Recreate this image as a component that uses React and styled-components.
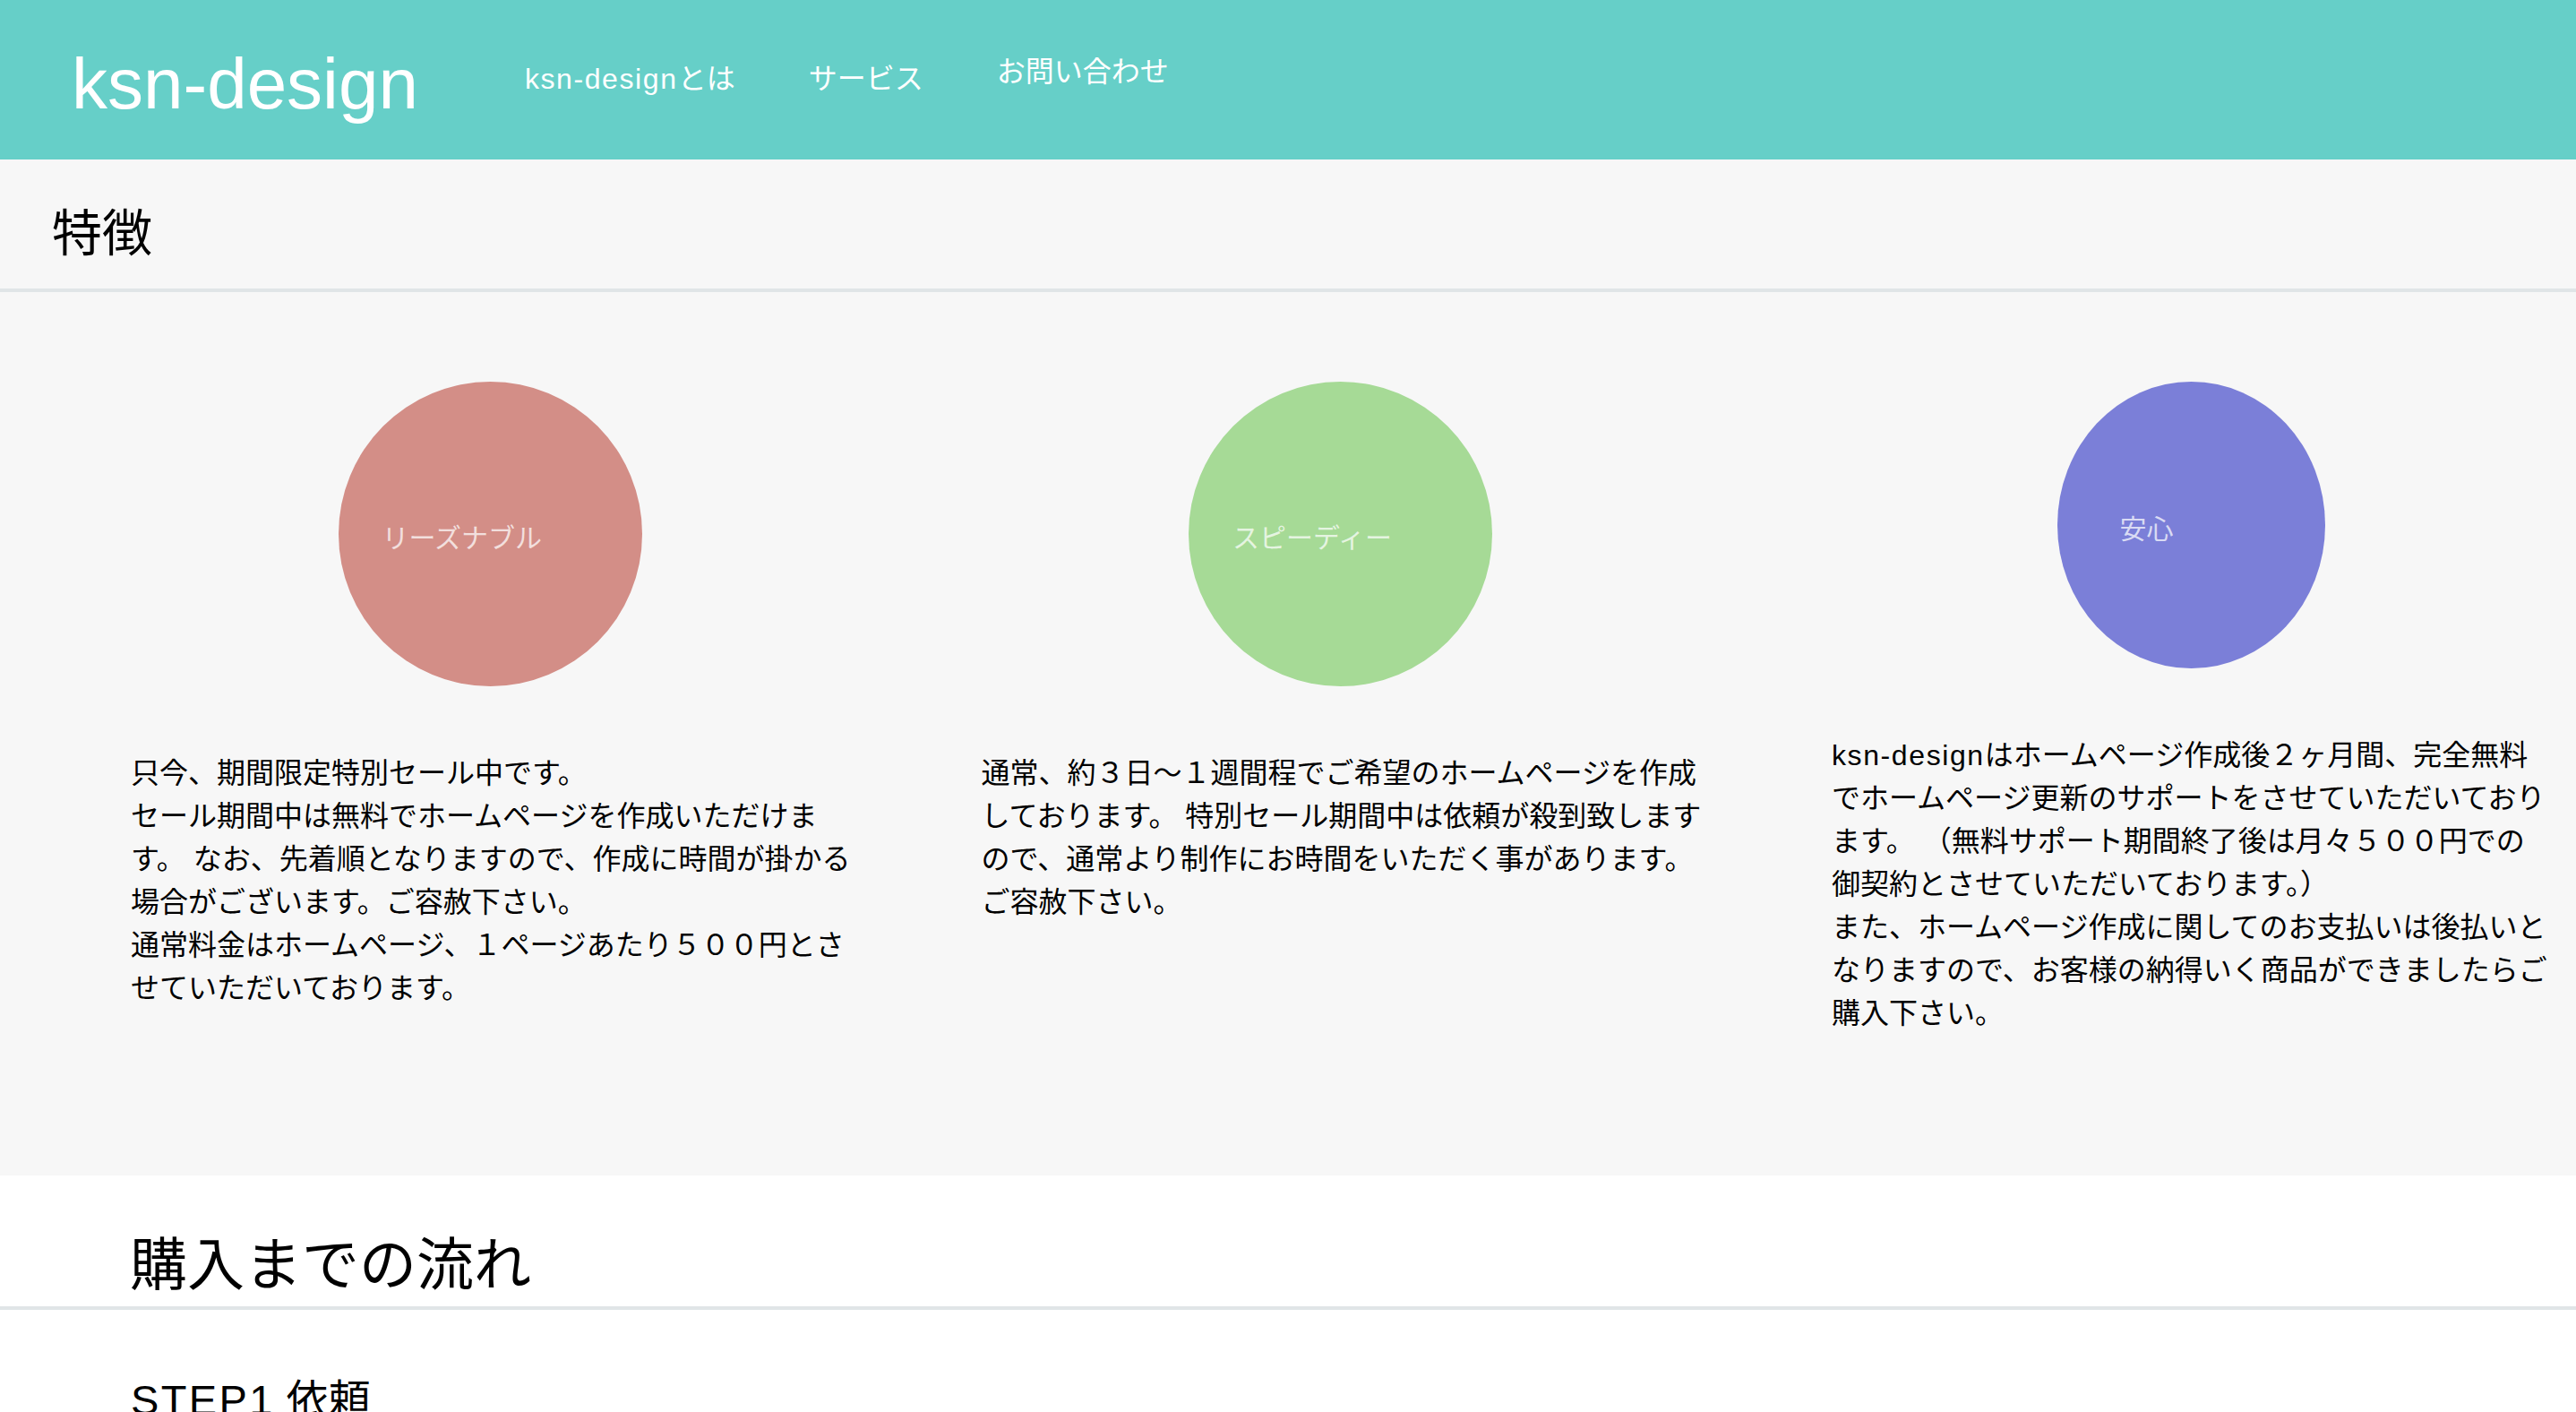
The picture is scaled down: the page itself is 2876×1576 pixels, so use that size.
import styled, { createGlobalStyle } from "styled-components";

const GlobalStyle = createGlobalStyle`
  body {
    margin: 0;
    font-family: "Liberation Sans", "Noto Sans CJK JP", sans-serif;
    color: #000;
    background-color: #fff;
  }
`;

// Latin words run a little wider in the original font
const Latin = styled.span`
  letter-spacing: 0.05em;
`;

const Header = styled.header`
  display: flex;
  align-items: flex-start;
  height: 178px;
  box-sizing: border-box;
  padding-left: 80px;
  background-color: #66cfc8;
  color: #fff;
`;

const Logo = styled.h1`
  margin: 54px 0 0;
  font-size: 80px;
  font-weight: normal;
  line-height: 1;
`;

const Nav = styled.nav`
  display: flex;
  align-items: flex-start;
  gap: 82px;
  margin-left: 119px;
`;

const NavItem = styled.a`
  margin-top: ${(props) => (props.$raised ? "64px" : "72px")};
  font-size: 32px;
  line-height: 1;
  color: #fff;
  text-decoration: none;
`;

const Features = styled.section`
  background-color: #f7f7f7;
  padding-bottom: 157px;
`;

const FeaturesBar = styled.div`
  padding: 55px 0 33px 58px;
  border-bottom: 4px solid #e0e5e7;
`;

const FeaturesTitle = styled.h2`
  margin: 0;
  font-size: 56px;
  font-weight: normal;
  line-height: 1;
`;

const FeatureGrid = styled.div`
  display: grid;
  grid-template-columns: repeat(3, 802px);
  column-gap: 147.5px;
  align-items: start;
  padding: 100px 0 0 146px;
`;

const Feature = styled.div`
  display: flex;
  flex-direction: column;
  align-items: flex-start;
`;

const Circle = styled.div`
  display: flex;
  align-items: center;
  align-self: center;
  box-sizing: border-box;
  width: ${(props) => props.$w}px;
  height: ${(props) => props.$h}px;
  padding: 4px 0 0 ${(props) => props.$pad}px;
  border-radius: 50%;
  background-color: ${(props) => props.$color};
  color: rgba(255, 255, 255, 0.72);
  font-size: 30px;
`;

const FeatureText = styled.p`
  width: ${(props) => props.$w}px;
  margin: 73px 0 0;
  font-size: 32px;
  line-height: 48px;
`;

const Flow = styled.section`
  background-color: #fff;
`;

const FlowBar = styled.div`
  padding: 68px 0 14px 145px;
  border-bottom: 4px solid #e0e5e7;
`;

const FlowTitle = styled.h2`
  margin: 0;
  font-size: 64px;
  font-weight: normal;
  line-height: 1;
`;

const StepTitle = styled.h3`
  margin: 0;
  padding: 77px 0 0 146px;
  font-size: 47px;
  font-weight: normal;
  line-height: 1;
`;

const features = [
  {
    label: "リーズナブル",
    color: "#d38e87",
    w: 339,
    h: 340,
    pad: 49,
    textWidth: 816,
    body: (
      <>
        只今、期間限定特別セール中です。
        <br />
        セール期間中は無料でホームページを作成いただけます。 なお、先着順となりますので、作成に時間が掛かる場合がございます。ご容赦下さい。
        <br />
        通常料金はホームページ、１ページあたり５００円とさせていただいております。
      </>
    ),
  },
  {
    label: "スピーディー",
    color: "#a6da96",
    w: 339,
    h: 340,
    pad: 49,
    textWidth: 816,
    body: (
      <>
        通常、約３日〜１週間程でご希望のホームページを作成しております。 特別セール期間中は依頼が殺到致しますので、通常より制作にお時間をいただく事があります。ご容赦下さい。
      </>
    ),
  },
  {
    label: "安心",
    color: "#7b7fd8",
    w: 299,
    h: 320,
    pad: 70,
    textWidth: 804,
    body: (
      <>
        <Latin>ksn-design</Latin>はホームページ作成後２ヶ月間、完全無料でホームページ更新のサポートをさせていただいております。 （無料サポート期間終了後は月々５００円での御契約とさせていただいております。）
        <br />
        また、ホームページ作成に関してのお支払いは後払いとなりますので、お客様の納得いく商品ができましたらご購入下さい。
      </>
    ),
  },
];

function App() {
  return (
    <>
      <GlobalStyle />
      <Header>
        <Logo>ksn-design</Logo>
        <Nav>
          <NavItem href="#about">
            <Latin>ksn-design</Latin>とは
          </NavItem>
          <NavItem href="#service">サービス</NavItem>
          <NavItem href="#contact" $raised>
            お問い合わせ
          </NavItem>
        </Nav>
      </Header>

      <Features>
        <FeaturesBar>
          <FeaturesTitle>特徴</FeaturesTitle>
        </FeaturesBar>
        <FeatureGrid>
          {features.map((f) => (
            <Feature key={f.label}>
              <Circle $color={f.color} $w={f.w} $h={f.h} $pad={f.pad}>
                {f.label}
              </Circle>
              <FeatureText $w={f.textWidth}>{f.body}</FeatureText>
            </Feature>
          ))}
        </FeatureGrid>
      </Features>

      <Flow>
        <FlowBar>
          <FlowTitle>購入までの流れ</FlowTitle>
        </FlowBar>
        <StepTitle>
          <Latin>STEP1</Latin> 依頼
        </StepTitle>
      </Flow>
    </>
  );
}

export default App;
